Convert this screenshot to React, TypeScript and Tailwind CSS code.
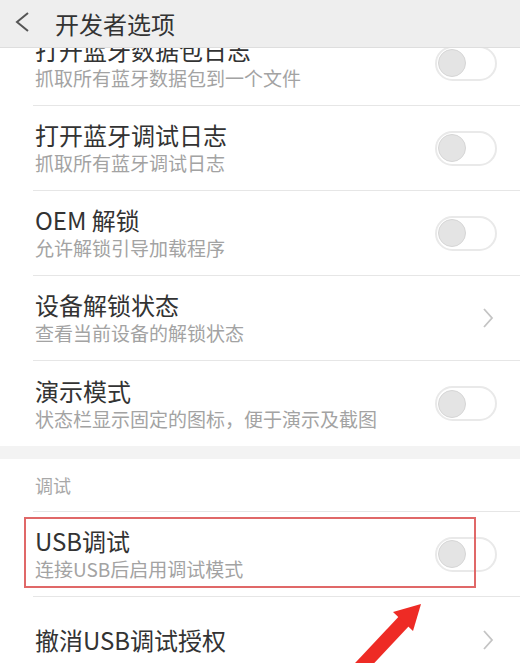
import React from "react";

const font = { fontFamily: '"Noto Sans CJK SC", "Noto Sans", sans-serif' };

function Toggle() {
  return (
    <div className="w-[62px] h-[35px] rounded-full border-2 border-[#e9e9e9] bg-white flex items-center pl-[1px] shrink-0">
      <div className="w-[28px] h-[28px] rounded-full bg-[#e4e4e4] border border-[#d6d6d6]" />
    </div>
  );
}

function Chevron() {
  return (
    <svg width="12" height="22" viewBox="0 0 12 22" className="shrink-0 mr-[3px]">
      <polyline points="2,2 10,11 2,20" fill="none" stroke="#c4c4c4" strokeWidth="1.8" />
    </svg>
  );
}

function Row({
  title,
  sub,
  right,
  divider = true,
  children,
}: {
  title: string;
  sub?: string;
  right: "toggle" | "chevron";
  divider?: boolean;
  children?: React.ReactNode;
}) {
  return (
    <div className="relative pl-[33px]">
      <div
        className={`h-[85px] flex items-center pr-[23px] pl-[2px] ${
          divider ? "border-b border-[#e6e6e6]" : ""
        }`}
      >
        <div className="flex-1 flex flex-col">
          <div className="text-[24px] leading-[30px] text-[#333333]">{title}</div>
          {sub && <div className="text-[19px] leading-[26px] text-[#a3a3a3]">{sub}</div>}
        </div>
        {right === "toggle" ? <Toggle /> : <Chevron />}
      </div>
      {children}
    </div>
  );
}

export default function App() {
  return (
    <div className="relative w-[520px] h-[663px] overflow-hidden bg-white" style={font}>
      <div className="mt-[21px] flex flex-col">
        <Row title="打开蓝牙数据包日志" sub="抓取所有蓝牙数据包到一个文件" right="toggle" />
        <Row title="打开蓝牙调试日志" sub="抓取所有蓝牙调试日志" right="toggle" />
        <Row title="OEM 解锁" sub="允许解锁引导加载程序" right="toggle" />
        <Row title="设备解锁状态" sub="查看当前设备的解锁状态" right="chevron" />
        <Row title="演示模式" sub="状态栏显示固定的图标，便于演示及截图" right="toggle" divider={false} />
        <div className="h-[13px] bg-[#f3f3f3]" />
        <div className="pl-[33px]">
          <div className="h-[53px] flex items-center pl-[2px] border-b border-[#e6e6e6] text-[18px] text-[#a8a8a8]">
            调试
          </div>
        </div>
        <div className="relative">
          <Row title="USB调试" sub="连接USB后启用调试模式" right="toggle" />
          <div className="absolute left-[24px] top-[5px] w-[452px] h-[71px] border-2 border-[#e06868]" />
        </div>
        <Row title="撤消USB调试授权" right="chevron" divider={false} />
      </div>

      <div className="absolute top-0 left-0 right-0 h-[48px] bg-[#eeeeee] border-b border-[#dedede] flex items-center">
        <svg width="40" height="48" viewBox="0 0 40 48" className="shrink-0">
          <polyline points="28,13 17,22 28,31" fill="none" stroke="#555555" strokeWidth="2" />
        </svg>
        <div className="ml-[15px] text-[24px] leading-none text-[#333333]">开发者选项</div>
      </div>

      <svg
        className="absolute left-0 top-0 pointer-events-none"
        width="520"
        height="663"
        viewBox="0 0 520 663"
      >
        <line x1="360" y1="668" x2="406" y2="619" stroke="#ee2b25" strokeWidth="14" />
        <polygon points="421,604 393,612 413,631" fill="#ee2b25" />
      </svg>
    </div>
  );
}
